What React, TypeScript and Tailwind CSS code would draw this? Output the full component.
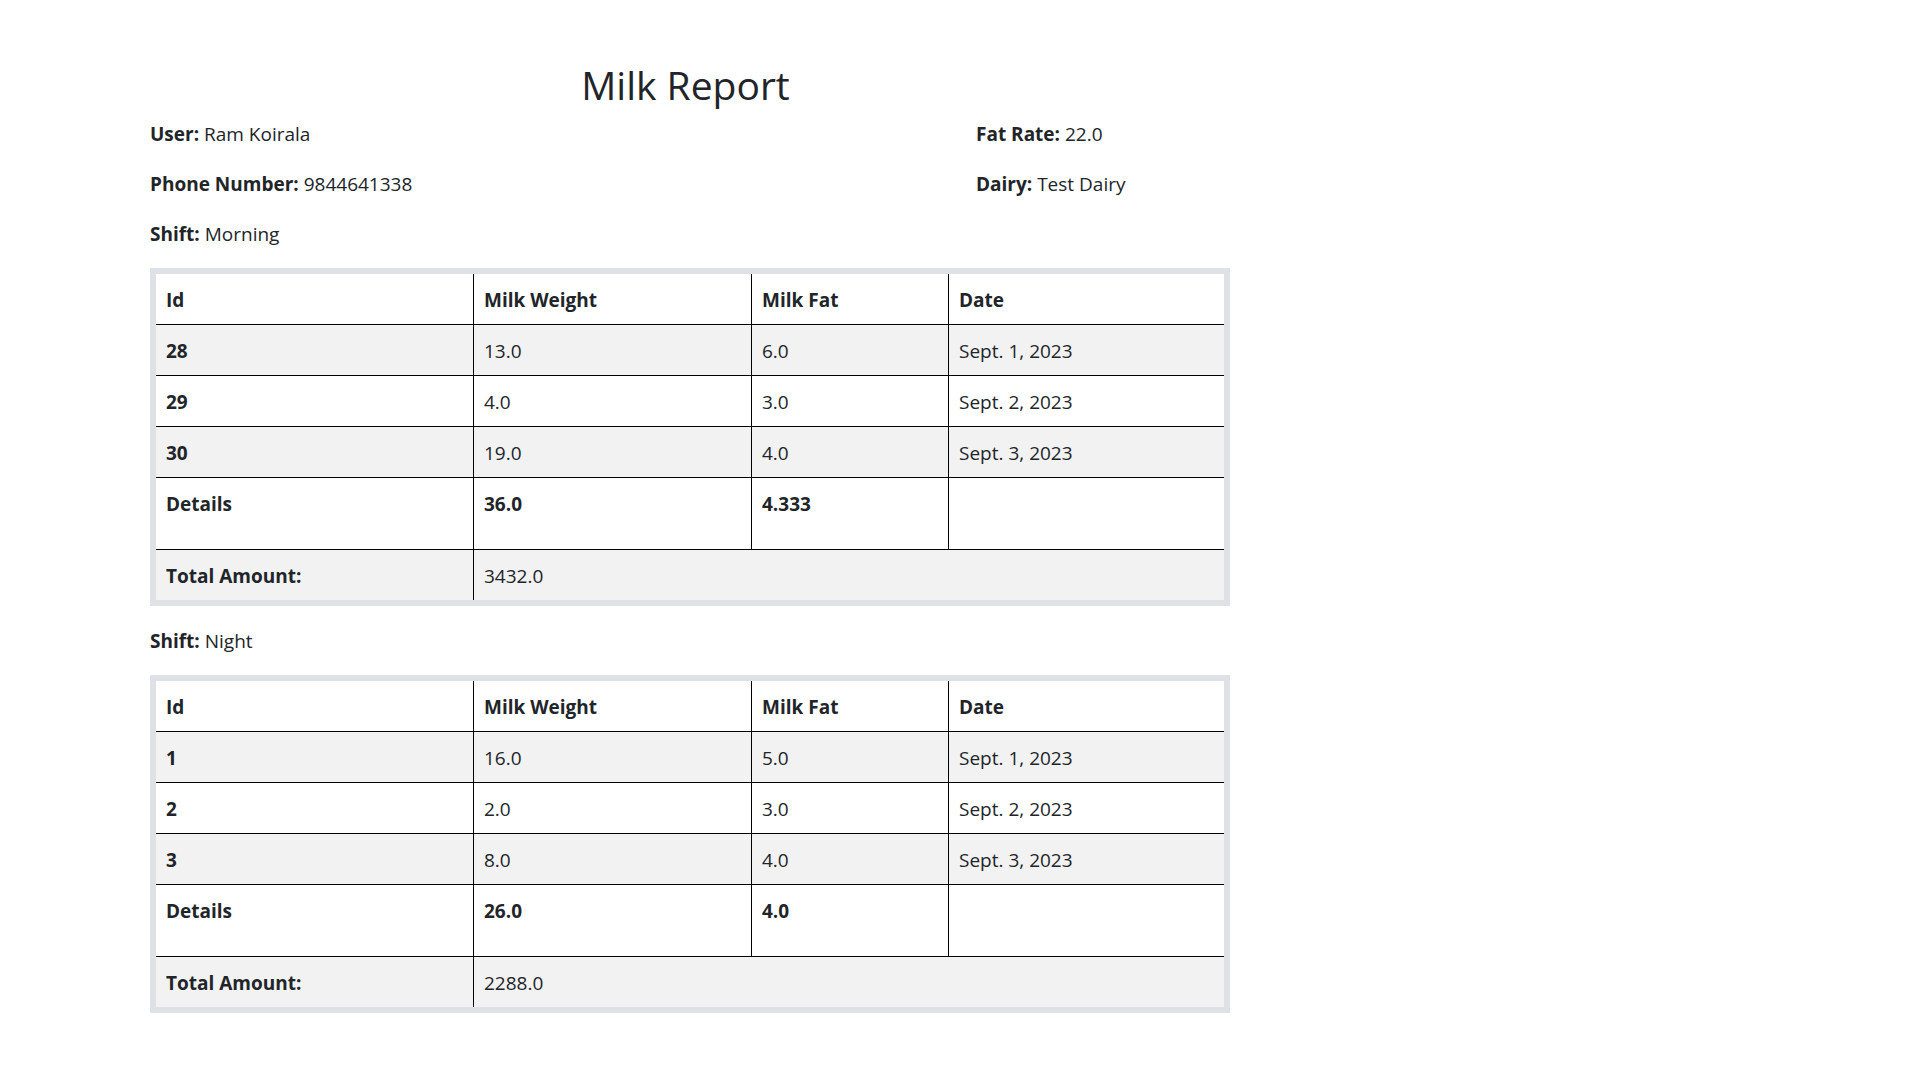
type Row = { id: string; weight: string; fat: string; date: string }

type ShiftReport = {
  shift: string
  rows: Row[]
  totalWeight: string
  avgFat: string
  amount: string
}

const reports: ShiftReport[] = [
  {
    shift: 'Morning',
    rows: [
      { id: '28', weight: '13.0', fat: '6.0', date: 'Sept. 1, 2023' },
      { id: '29', weight: '4.0', fat: '3.0', date: 'Sept. 2, 2023' },
      { id: '30', weight: '19.0', fat: '4.0', date: 'Sept. 3, 2023' },
    ],
    totalWeight: '36.0',
    avgFat: '4.333',
    amount: '3432.0',
  },
  {
    shift: 'Night',
    rows: [
      { id: '1', weight: '16.0', fat: '5.0', date: 'Sept. 1, 2023' },
      { id: '2', weight: '2.0', fat: '3.0', date: 'Sept. 2, 2023' },
      { id: '3', weight: '8.0', fat: '4.0', date: 'Sept. 3, 2023' },
    ],
    totalWeight: '26.0',
    avgFat: '4.0',
    amount: '2288.0',
  },
]

const cell = 'border-b border-black px-[10px] pt-[11px] leading-[29px]'
const cellL = 'border-l border-black'

function InfoLine({ label, value }: { label: string; value: string }) {
  return (
    <p className="leading-[29px]">
      <strong className="font-bold">{label}:</strong> {value}
    </p>
  )
}

function ReportTable({ report }: { report: ShiftReport }) {
  return (
    <div className="w-[1080px] border-[6px] border-[#dee2e6]">
      <div className="grid grid-cols-[317px_278px_197px_276px]">
        <div className={`${cell} h-[51px] bg-white pt-[12px] font-bold`}>Id</div>
        <div className={`${cell} ${cellL} h-[51px] bg-white pt-[12px] font-bold`}>Milk Weight</div>
        <div className={`${cell} ${cellL} h-[51px] bg-white pt-[12px] font-bold`}>Milk Fat</div>
        <div className={`${cell} ${cellL} h-[51px] bg-white pt-[12px] font-bold`}>Date</div>

        {report.rows.map((r, i) => {
          const bg = i % 2 === 0 ? 'bg-[#f2f2f2]' : 'bg-white'
          return (
            <div key={r.id} className="contents">
              <div className={`${cell} ${bg} h-[51px] pt-[12px] font-bold`}>{r.id}</div>
              <div className={`${cell} ${cellL} ${bg} h-[51px] pt-[12px]`}>{r.weight}</div>
              <div className={`${cell} ${cellL} ${bg} h-[51px] pt-[12px]`}>{r.fat}</div>
              <div className={`${cell} ${cellL} ${bg} h-[51px] pt-[12px]`}>{r.date}</div>
            </div>
          )
        })}

        <div className={`${cell} h-[72px] bg-white pt-[12px] font-bold`}>Details</div>
        <div className={`${cell} ${cellL} h-[72px] bg-white pt-[12px] font-bold`}>{report.totalWeight}</div>
        <div className={`${cell} ${cellL} h-[72px] bg-white pt-[12px] font-bold`}>{report.avgFat}</div>
        <div className={`${cell} ${cellL} h-[72px] bg-white`}></div>

        <div className="h-[50px] bg-[#f2f2f2] px-[10px] pt-[12px] font-bold leading-[29px]">Total Amount:</div>
        <div className="col-span-3 h-[50px] border-l border-black bg-[#f2f2f2] px-[10px] pt-[12px] leading-[29px]">
          {report.amount}
        </div>
      </div>
    </div>
  )
}

export default function App() {
  return (
    <div className="min-h-screen bg-white pl-[150px] pt-[62px] text-[19px] text-[#212529] font-['Open_Sans',sans-serif]">
      <h2 className="w-[1071px] text-center text-[39px] font-medium leading-[46px]">Milk Report</h2>

      <div className="mt-[12px] grid grid-cols-[826px_auto]">
        <div className="flex flex-col gap-[21px]">
          <InfoLine label="User" value="Ram Koirala" />
          <InfoLine label="Phone Number" value="9844641338" />
        </div>
        <div className="flex flex-col gap-[21px]">
          <InfoLine label="Fat Rate" value="22.0" />
          <InfoLine label="Dairy" value="Test Dairy" />
        </div>
      </div>

      {reports.map((report) => (
        <section key={report.shift} className="mt-[21px]">
          <InfoLine label="Shift" value={report.shift} />
          <div className="mt-[19px]">
            <ReportTable report={report} />
          </div>
        </section>
      ))}
    </div>
  )
}
